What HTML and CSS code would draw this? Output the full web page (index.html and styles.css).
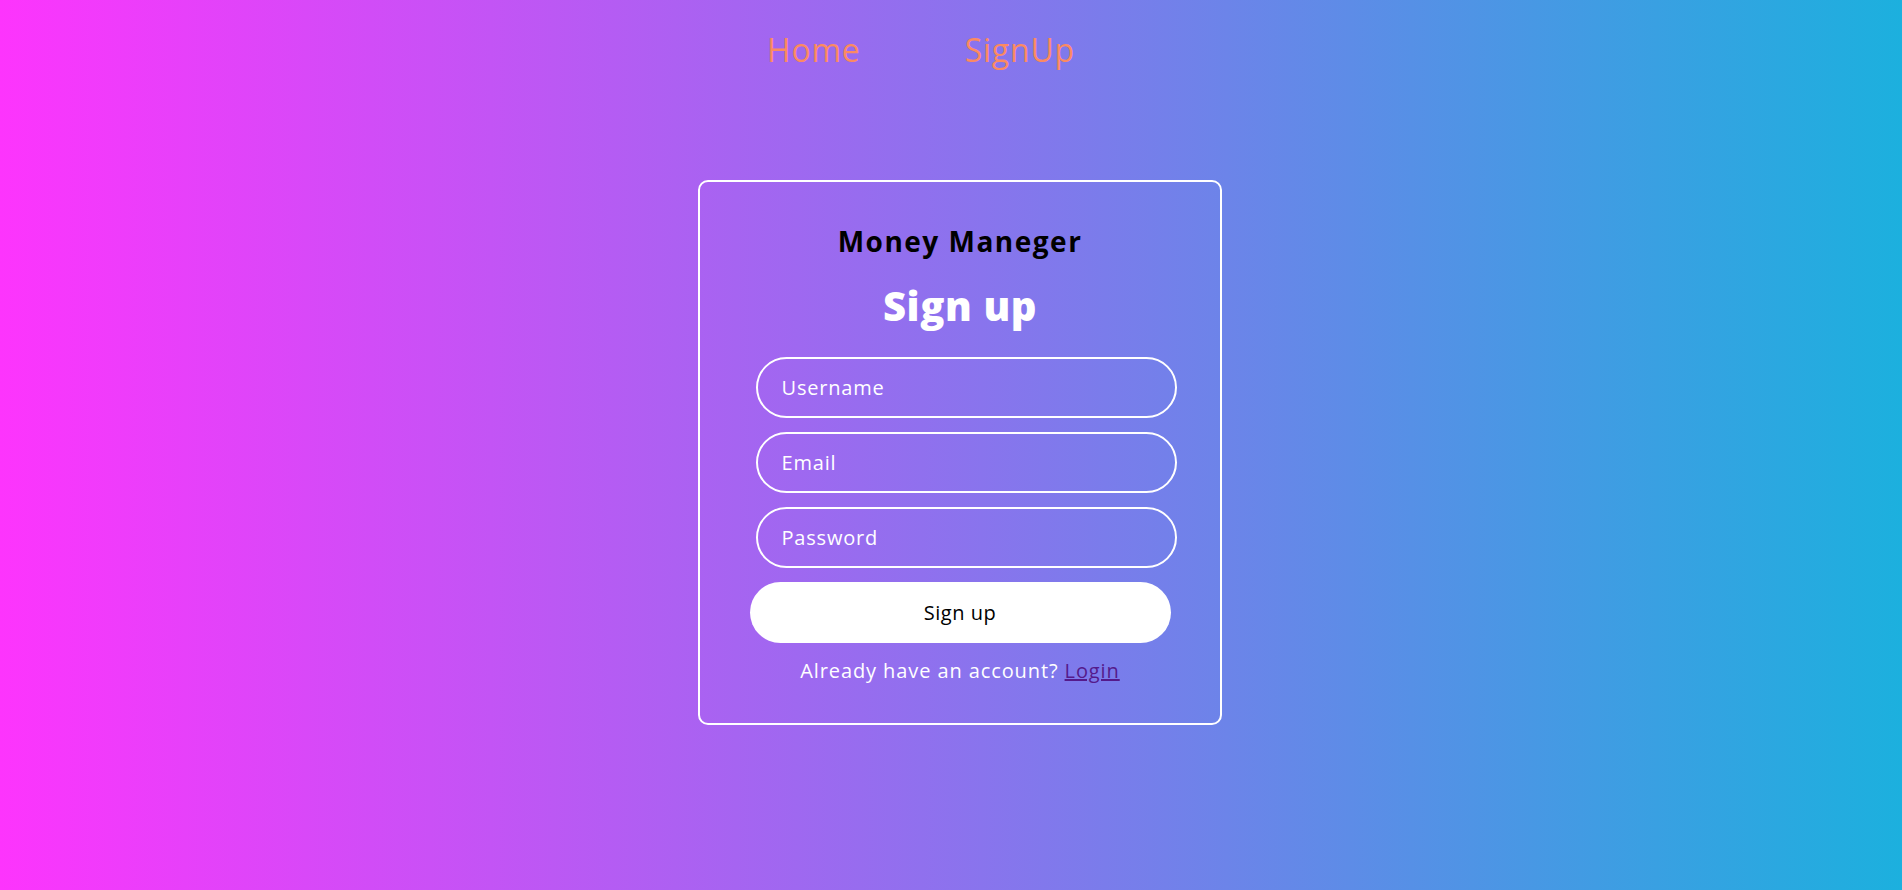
FILE: index.html
```html
<!DOCTYPE html>
<html lang="en">
<head>
<meta charset="utf-8">
<title>Money Maneger - Sign up</title>
<link rel="stylesheet" href="styles.css">
</head>
<body>
  <nav class="nav">
    <a class="nav-link" href="#">Home</a>
    <a class="nav-link" href="#">SignUp</a>
  </nav>
  <main class="main">
    <section class="card">
      <h2 class="brand">Money Maneger</h2>
      <h1 class="title">Sign up</h1>
      <form class="form">
        <input class="field" type="text" placeholder="Username">
        <input class="field" type="email" placeholder="Email">
        <input class="field" type="password" placeholder="Password">
        <button class="submit" type="button">Sign up</button>
      </form>
      <p class="note">Already have an account? <a class="login" href="#">Login</a></p>
    </section>
  </main>
</body>
</html>
```

FILE: styles.css
```css
* { box-sizing: border-box; }

html, body { height: 100%; }

body {
  margin: 0;
  min-height: 100vh;
  background: linear-gradient(to right, #fd34fd, #1cb0de);
  font-family: "Open Sans", "Liberation Sans", sans-serif;
  color: #fff;
}

.nav {
  display: flex;
  justify-content: center;
  gap: 104px;
  padding-top: 30px;
  padding-right: 60px;
}

.nav-link {
  font-size: 32px;
  line-height: 40px;
  font-weight: 400;
  letter-spacing: 0.8px;
  color: #fb8a62;
  text-decoration: none;
}

.main {
  display: flex;
  justify-content: center;
  padding-top: 110px;
  padding-left: 18px;
}

.card {
  width: 524px;
  height: 545px;
  border: 2px solid #fff;
  border-radius: 10px;
  padding: 42px 0 0;
  display: flex;
  flex-direction: column;
  align-items: center;
}

.brand {
  margin: 0;
  font-size: 28px;
  line-height: 34px;
  font-weight: 700;
  letter-spacing: 1.5px;
  color: #000;
}

.title {
  margin: 24px 0 0;
  font-size: 40px;
  line-height: 48px;
  font-weight: 800;
  letter-spacing: 0.6px;
  color: #fff;
}

.form {
  width: 421px;
  margin-top: 27px;
  display: flex;
  flex-direction: column;
  gap: 14px;
}

.field {
  width: 421px;
  height: 61px;
  margin-left: 6px;
  border: 2px solid #fff;
  border-radius: 31px;
  background: transparent;
  padding: 0 24px;
  font-family: inherit;
  font-size: 20px;
  letter-spacing: 0.8px;
  color: #fff;
  outline: none;
}

.field::placeholder { color: #fff; opacity: 1; }

.submit {
  width: 421px;
  height: 61px;
  border: none;
  border-radius: 31px;
  background: #fff;
  color: #000;
  font-family: inherit;
  font-size: 20px;
  letter-spacing: 0.5px;
  cursor: pointer;
}

.note {
  margin: 14px 0 0;
  font-size: 20px;
  line-height: 28px;
  letter-spacing: 0.9px;
  color: #fff;
}

.login {
  color: #551a8b;
  text-decoration: underline;
}
```
